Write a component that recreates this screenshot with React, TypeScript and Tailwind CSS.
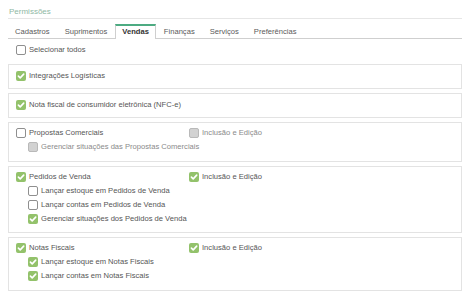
type CheckState = 'checked' | 'unchecked' | 'disabled'

const Box = ({ state }: { state: CheckState }) => {
  if (state === 'checked') {
    return (
      <span className="flex h-[10px] w-[10px] shrink-0 items-center justify-center rounded-[2px] bg-[#93c26b]">
        <svg width="10" height="10" viewBox="0 0 10 10">
          <path d="M2.4 5.1 L4.2 6.9 L7.7 3.1" fill="none" stroke="#ffffff" strokeWidth="1.6" strokeLinecap="round" strokeLinejoin="round" />
        </svg>
      </span>
    )
  }
  if (state === 'disabled') {
    return <span className="h-[10px] w-[10px] shrink-0 rounded-[2px] border border-[#b9b9b9] bg-[#d2d2d2]" />
  }
  return <span className="h-[10px] w-[10px] shrink-0 rounded-[2px] border border-[#8f8f8f] bg-white" />
}

const Item = ({ label, state, muted }: { label: string; state: CheckState; muted?: boolean }) => (
  <div className="flex h-[14px] items-center gap-[3px]">
    <Box state={state} />
    <span className={muted ? 'text-[#8a8a8a]' : 'text-[#555555]'}>{label}</span>
  </div>
)

const tabs = ['Cadastros', 'Suprimentos', 'Vendas', 'Finanças', 'Serviços', 'Preferências']

export default function App() {
  return (
    <div className="h-[295px] w-[474px] bg-white pl-[8px] pr-[12px] font-['Liberation_Sans',Arial,sans-serif] text-[7.6px] text-[#555555]">
      {/* titulo */}
      <div className="h-[19px] border-b border-[#e6e6e6] pl-[1px] pt-[7px] text-[8px] leading-[10px] text-[#8fb8a4]">
        Permissões
      </div>

      {/* abas */}
      <div className="mt-[5px] flex h-[15px] gap-[1px] border-b border-[#cfcfcf]">
        {tabs.map((t) =>
          t === 'Vendas' ? (
            <div
              key={t}
              className="relative flex h-[15px] items-center border-x border-t-2 border-x-[#cfcfcf] border-t-[#4dab82] bg-white px-[6px] pb-[1px] text-[7.6px] font-bold text-[#333333]"
            >
              {t}
            </div>
          ) : (
            <div key={t} className="flex h-[14px] items-center px-[7px] pt-[1px] text-[7.6px] text-[#5a5a5a]">
              {t}
            </div>
          )
        )}
      </div>

      <div className="mt-[4px] pl-[8px]">
        <Item label="Selecionar todos" state="unchecked" />
      </div>

      <div className="mt-[7px] flex flex-col gap-[4px]">
        <div className="border border-[#e3e3e3] pb-[5px] pl-[7px] pt-[4px]">
          <Item label="Integrações Logísticas" state="checked" />
        </div>

        <div className="border border-[#e3e3e3] pb-[5px] pl-[7px] pt-[4px]">
          <Item label="Nota fiscal de consumidor eletrônica (NFC-e)" state="checked" />
        </div>

        <div className="border border-[#e3e3e3] pb-[7px] pl-[7px] pt-[3px]">
          <div className="flex">
            <div className="w-[173px]">
              <Item label="Propostas Comerciais" state="unchecked" />
            </div>
            <Item label="Inclusão e Edição" state="disabled" muted />
          </div>
          <div className="pl-[12px]">
            <Item label="Gerenciar situações das Propostas Comerciais" state="disabled" muted />
          </div>
        </div>

        <div className="border border-[#e3e3e3] pb-[6px] pl-[7px] pt-[3px]">
          <div className="flex">
            <div className="w-[173px]">
              <Item label="Pedidos de Venda" state="checked" />
            </div>
            <Item label="Inclusão e Edição" state="checked" />
          </div>
          <div className="pl-[12px]">
            <Item label="Lançar estoque em Pedidos de Venda" state="unchecked" />
            <Item label="Lançar contas em Pedidos de Venda" state="unchecked" />
            <Item label="Gerenciar situações dos Pedidos de Venda" state="checked" />
          </div>
        </div>

        <div className="border border-[#e3e3e3] pb-[7px] pl-[7px] pt-[3px]">
          <div className="flex">
            <div className="w-[173px]">
              <Item label="Notas Fiscais" state="checked" />
            </div>
            <Item label="Inclusão e Edição" state="checked" />
          </div>
          <div className="pl-[12px]">
            <Item label="Lançar estoque em Notas Fiscais" state="checked" />
            <Item label="Lançar contas em Notas Fiscais" state="checked" />
          </div>
        </div>
      </div>
    </div>
  )
}
